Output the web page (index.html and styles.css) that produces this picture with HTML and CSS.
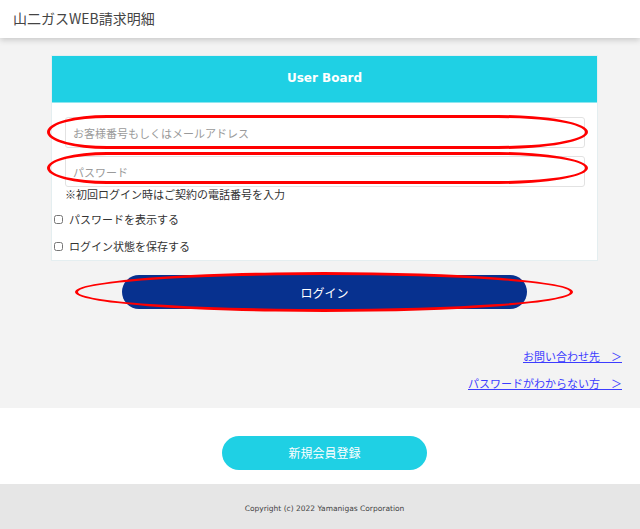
FILE: index.html
```html
<!DOCTYPE html>
<html lang="ja">
<head>
    <meta charset="UTF-8">
    <meta name="viewport" content="width=device-width, initial-scale=1.0">
    <title>山二ガスWEB請求明細</title>
    <link rel="stylesheet" href="styles.css">
</head>
<body>
    <header class="header">
        <h1 class="title">山二ガスWEB請求明細</h1>
    </header>

    <main class="main">
        <form class="board" onsubmit="return false;">
            <div class="board-head">User Board</div>
            <div class="board-body">
                <div class="field field-first">
                    <input type="text" class="text-input" placeholder="お客様番号もしくはメールアドレス">
                    <span class="mark mark-id"></span>
                </div>
                <div class="field field-second">
                    <input type="password" class="text-input" placeholder="パスワード">
                    <span class="mark mark-pw"></span>
                </div>
                <p class="note">※初回ログイン時はご契約の電話番号を入力</p>
                <label class="check check-show">
                    <input type="checkbox">パスワードを表示する
                </label>
                <label class="check check-keep">
                    <input type="checkbox">ログイン状態を保存する
                </label>
            </div>
        </form>

        <div class="login-row">
            <div class="login-wrap">
                <button type="button" class="login-button">ログイン</button>
                <span class="mark mark-login"></span>
            </div>
        </div>

        <div class="links">
            <a href="#" class="link">お問い合わせ先　＞</a>
            <a href="#" class="link">パスワードがわからない方　＞</a>
        </div>
    </main>

    <section class="register">
        <a href="#" class="register-button">新規会員登録</a>
    </section>

    <footer class="footer">
        Copyright (c) 2022 Yamanigas Corporation
    </footer>
</body>
</html>
```

FILE: styles.css
```css
* {
    margin: 0;
    padding: 0;
    box-sizing: border-box;
}

body {
    font-family: "Noto Sans CJK JP", "Noto Sans", sans-serif;
    background-color: #f3f3f3;
    color: #333;
    width: 640px;
}

.header {
    position: relative;
    height: 38px;
    background: white;
    box-shadow: 0 2px 6px rgba(0, 0, 0, 0.18);
    z-index: 1;
}

.title {
    padding-left: 13px;
    font-size: 14px;
    font-weight: normal;
    line-height: 36px;
    color: #444;
}

.main {
    padding: 17px 0 17px 0;
}

.board {
    width: 547px;
    margin-left: 51px;
    background: white;
    border: 1px solid #e4eef0;
}

.board-head {
    height: 47px;
    background-color: #1fd0e4;
    border-bottom: 1px solid #8fe6ef;
    color: white;
    font-family: "DejaVu Sans", Verdana, sans-serif;
    font-weight: bold;
    font-size: 12px;
    line-height: 44px;
    text-align: center;
}

.board-body {
    padding: 14px 12px 6px 13px;
}

.field {
    position: relative;
}

.field-second {
    margin-top: 8px;
}

.text-input {
    display: block;
    width: 100%;
    height: 31px;
    padding: 0 7px;
    border: 1px solid #e2e2e2;
    border-radius: 3px;
    font-family: inherit;
    font-size: 11px;
    color: #333;
    background: white;
}

.text-input::placeholder {
    color: #9a9a9a;
}

.note {
    font-size: 11px;
    line-height: 15px;
}

.check {
    display: flex;
    align-items: center;
    gap: 6px;
    margin-left: -11px;
    font-size: 11px;
    line-height: 16px;
}

.check input {
    width: 9px;
    height: 9px;
    margin: 0;
}

.check-show {
    margin-top: 9px;
}

.check-keep {
    margin-top: 11px;
}

.mark {
    position: absolute;
    border: 3px solid #ff0000;
    border-radius: 60px 90px 90px 60px / 50%;
    pointer-events: none;
}

.mark-id {
    left: -18px;
    right: -3px;
    top: -2px;
    bottom: -1px;
}

.mark-pw {
    left: -18px;
    right: -3px;
    top: -4px;
    bottom: 3px;
}

.login-row {
    display: flex;
    justify-content: center;
    width: 547px;
    margin: 14px 0 0 51px;
}

.login-wrap {
    position: relative;
}

.login-button {
    display: block;
    width: 405px;
    height: 34px;
    border: none;
    border-radius: 17px;
    background-color: #07318f;
    color: white;
    font-family: inherit;
    font-size: 12px;
}

.mark-login {
    left: -47px;
    right: -46px;
    top: -3px;
    bottom: -3px;
    border-radius: 50%;
}

.links {
    display: flex;
    flex-direction: column;
    align-items: flex-end;
    gap: 11px;
    padding-right: 18px;
    margin-top: 39px;
}

.link {
    font-size: 11px;
    line-height: 16px;
    color: #3c3cff;
}

.register {
    display: flex;
    justify-content: center;
    height: 76px;
    padding: 28px 0 0 9px;
    background: white;
}

.register-button {
    display: block;
    width: 205px;
    height: 34px;
    border-radius: 17px;
    background-color: #1fd0e4;
    color: white;
    font-size: 12px;
    line-height: 34px;
    text-align: center;
    text-decoration: none;
}

.footer {
    height: 45px;
    padding: 19px 0 0 9px;
    background-color: #e6e6e6;
    font-family: "DejaVu Sans", Verdana, sans-serif;
    font-size: 7.5px;
    line-height: 12px;
    text-align: center;
    color: #444;
}
```
